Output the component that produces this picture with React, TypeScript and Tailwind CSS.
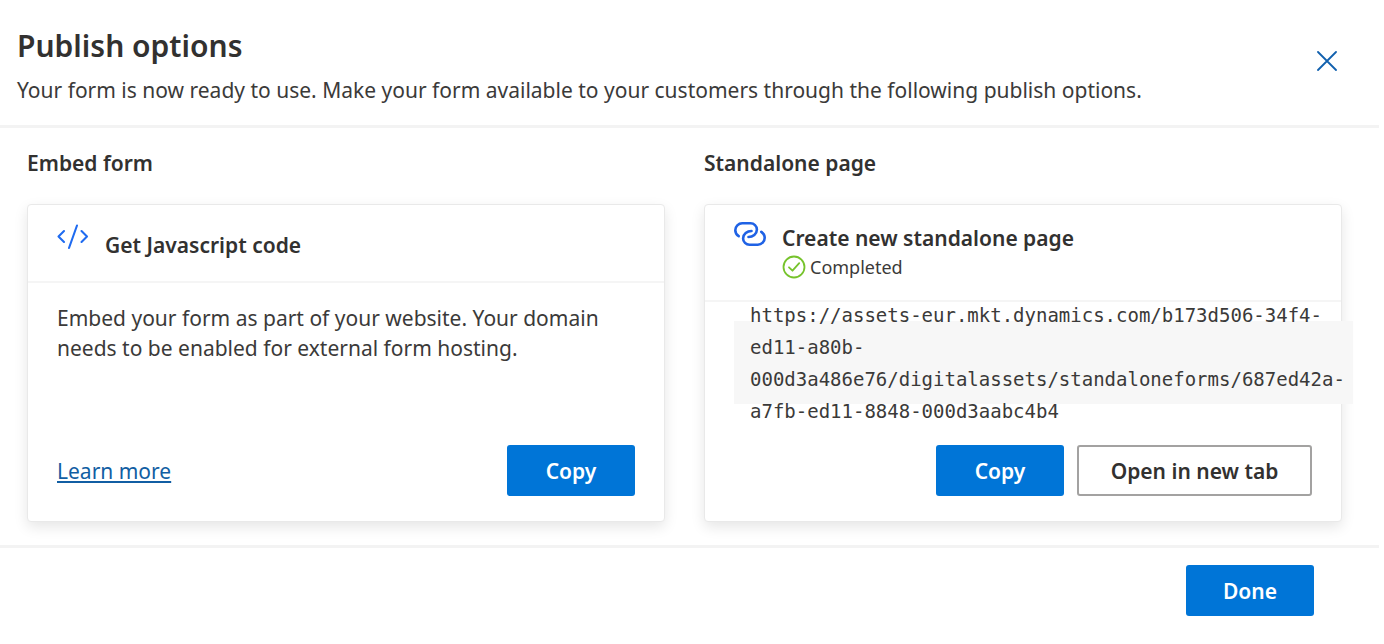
import type { ReactNode } from 'react';

function PrimaryButton({ children }: { children: ReactNode }) {
  return (
    <button
      type="button"
      className="h-[51px] w-32 shrink-0 rounded-[3px] bg-[#0075d7] pt-0.5 text-[21px] font-semibold text-white"
    >
      {children}
    </button>
  );
}

function CloseIcon() {
  return (
    <svg width="20" height="20" viewBox="0 0 20 20" fill="none" stroke="#1160ae" strokeWidth="1.8" strokeLinecap="round" aria-hidden="true">
      <path d="M1 1 19 19M19 1 1 19" />
    </svg>
  );
}

function CodeIcon() {
  return (
    <svg width="32" height="26" viewBox="0 0 32 26" fill="none" stroke="#1f6bf0" strokeWidth="2.1" strokeLinecap="round" strokeLinejoin="round" aria-hidden="true">
      <path d="M7 7 1.500 12.500l5.500 5.500M24.500 7l5.500 5.500-5.500 5.500M20 1.500 12 24" />
    </svg>
  );
}

function LinkIcon() {
  return (
    <svg width="32" height="24" viewBox="0 0 32 24" fill="none" stroke="#1f62e5" strokeWidth="2.6" strokeLinecap="round" aria-hidden="true">
      <path d="M4.700 14.200C2.600 12.900 1.300 10.700 1.300 8.200A6.900 6.900 0 0 1 8.200 1.300H16.500C20 1.300 22.900 4 22.900 7.600 22.900 12 18.800 15 14.500 15" />
      <path d="M27.300 9.800C29.400 11.100 30.700 13.300 30.700 15.800A6.900 6.900 0 0 1 23.800 22.700H15.500C12 22.700 9.100 20 9.100 16.400 9.100 12 13.200 9 17.500 9" />
    </svg>
  );
}

function CompletedIcon() {
  return (
    <svg width="24" height="24" viewBox="0 0 24 24" fill="none" stroke="#76c32c" strokeWidth="1.8" strokeLinecap="round" strokeLinejoin="round" aria-hidden="true">
      <circle cx="12" cy="12" r="10.500" />
      <path d="m7 12.300 3.500 3.400 6.700-7.500" />
    </svg>
  );
}

function Card({ children }: { children: ReactNode }) {
  return (
    <article className="flex h-[318px] flex-col rounded-[4px] border border-[#e9e9e9] bg-white shadow-[0_5px_14px_rgba(0,0,0,0.10)]">
      {children}
    </article>
  );
}

export default function App() {
  return (
    <main className="pr-[5px] font-['Noto_Sans','Open_Sans',sans-serif] text-[21px] text-[#3b3a39]">
      <header className="flex items-start justify-between border-b-[3px] border-[#f3f3f3] pt-[25px] pr-[42px] pb-5 pl-[17px]">
        <div>
          <h1 className="text-[30px] leading-[42px] font-semibold text-[#323130]">Publish options</h1>
          <p className="mt-[9px] leading-[29px]">
            Your form is now ready to use. Make your form available to your customers through the following publish options.
          </p>
        </div>
        <button type="button" aria-label="Close" className="mt-[26px]">
          <CloseIcon />
        </button>
      </header>

      <div className="grid grid-cols-2 gap-[39px] border-b-[3px] border-[#f3f3f3] pt-5 pr-[37px] pb-[23px] pl-[27px]">
        <section>
          <h2 className="mb-[26px] leading-[30px] font-semibold text-[#323130]">Embed form</h2>
          <Card>
            <div className="flex h-[78px] gap-4 border-b-2 border-[#f5f5f5] px-[29px]">
              <div className="pt-[19px]">
                <CodeIcon />
              </div>
              <h3 className="pt-[25px] leading-[30px] font-semibold text-[#323130]">Get Javascript code</h3>
            </div>
            <p className="px-[29px] pt-5 leading-[30px]">
              Embed your form as part of your website. Your domain needs to be enabled for external form hosting.
            </p>
            <div className="mt-auto flex items-center justify-between px-[29px] pb-[25px]">
              <a href="#learn-more" className="pt-0.5 text-[#115ea3] underline decoration-2 underline-offset-2">Learn more</a>
              <PrimaryButton>Copy</PrimaryButton>
            </div>
          </Card>
        </section>

        <section>
          <h2 className="mb-[26px] leading-[30px] font-semibold text-[#323130]">Standalone page</h2>
          <Card>
            <div className="flex h-[97px] shrink-0 gap-4 border-b-2 border-[#f5f5f5] px-[29px]">
              <div className="pt-[17px]">
                <LinkIcon />
              </div>
              <div className="pt-[18px]">
                <h3 className="leading-[30px] font-semibold text-[#323130]">Create new standalone page</h3>
                <p className="flex items-center gap-1 text-[18px] leading-7">
                  <CompletedIcon />
                  Completed
                </p>
              </div>
            </div>
            <div className="mt-[19px] -mr-3 ml-[29px] flex h-[83px] items-center bg-[#f7f7f7] pl-4">
              <code className="font-['DejaVu_Sans_Mono',monospace] text-[19px] leading-8 whitespace-nowrap">
                https://assets-eur.mkt.dynamics.com/b173d506-34f4-
                <br />
                ed11-a80b-
                <br />
                000d3a486e76/digitalassets/standaloneforms/687ed42a-
                <br />
                a7fb-ed11-8848-000d3aabc4b4
              </code>
            </div>
            <div className="mt-auto flex justify-end gap-[13px] px-[29px] pb-[25px]">
              <PrimaryButton>Copy</PrimaryButton>
              <button
                type="button"
                className="h-[51px] w-[235px] rounded-[3px] border-2 border-[#a3a2a1] bg-white pt-0.5 font-semibold text-[#323130]"
              >
                Open in new tab
              </button>
            </div>
          </Card>
        </section>
      </div>

      <footer className="flex justify-end pt-[17px] pr-[65px] pb-7">
        <PrimaryButton>Done</PrimaryButton>
      </footer>
    </main>
  );
}
